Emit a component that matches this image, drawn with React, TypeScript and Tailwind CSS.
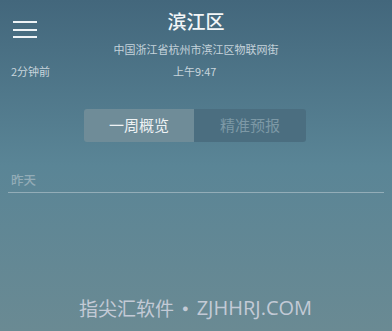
export default function App() {
  return (
    <div
      className="relative w-[392px] h-[331px] overflow-hidden bg-gradient-to-b from-[#43677c] via-[#5a8596] to-[#6a8a93]"
      style={{ fontFamily: '"Noto Sans CJK SC", "Noto Sans", sans-serif' }}
    >
      {/* 顶部栏 */}
      <div className="relative h-[60px]">
        <div className="absolute left-[13px] top-[21px] flex flex-col gap-[5.5px]">
          <span className="block w-[24px] h-[2px] bg-[#eef3f6]" />
          <span className="block w-[24px] h-[2px] bg-[#eef3f6]" />
          <span className="block w-[24px] h-[2px] bg-[#eef3f6]" />
        </div>
        <div className="flex flex-col items-center pt-[7px]">
          <h1 className="text-[19px] leading-[28px] font-medium text-[#f3f6f8]">滨江区</h1>
          <p className="mt-[6px] text-[11px] leading-[16px] text-[#c5d3db]">
            中国浙江省杭州市滨江区物联网街
          </p>
        </div>
      </div>

      <div className="relative h-[22px] text-[11px] leading-[22px] text-[#c8d5dc]">
        <span className="absolute left-[11px]">2分钟前</span>
        <span className="absolute left-[173px]">上午9:47</span>
      </div>

      {/* 切换标签 */}
      <div className="mt-[27px] flex justify-center">
        <div className="flex mr-[2px] w-[222px] h-[33px] rounded-[3px] overflow-hidden text-[15px]">
          <div className="w-[110px] flex items-center justify-center bg-[#6f8c98] text-[#eef2f4]">一周概览</div>
          <div className="flex-1 flex items-center justify-center bg-[#4b6e80] text-[#7d99a6]">精准预报</div>
        </div>
      </div>

      {/* 昨天 */}
      <div className="mt-[28px] px-[8px]">
        <div className="pl-[3px] text-[12.5px] leading-[20px] font-medium text-[#93acb7]">昨天</div>
        <div className="mt-[2px] h-px bg-[#93adb8]" />
      </div>

      {/* 水印 */}
      <div className="absolute left-[79px] bottom-[11px] flex items-center text-[19px] leading-[24px] text-[#c3cad6]">
        <span>指尖汇软件</span>
        <span className="mx-[8px] text-[11px]" style={{ fontFamily: '"Open Sans", sans-serif' }}>●</span>
        <span className="text-[20px]" style={{ fontFamily: '"Open Sans", sans-serif' }}>ZJHHRJ.COM</span>
      </div>
    </div>
  );
}
